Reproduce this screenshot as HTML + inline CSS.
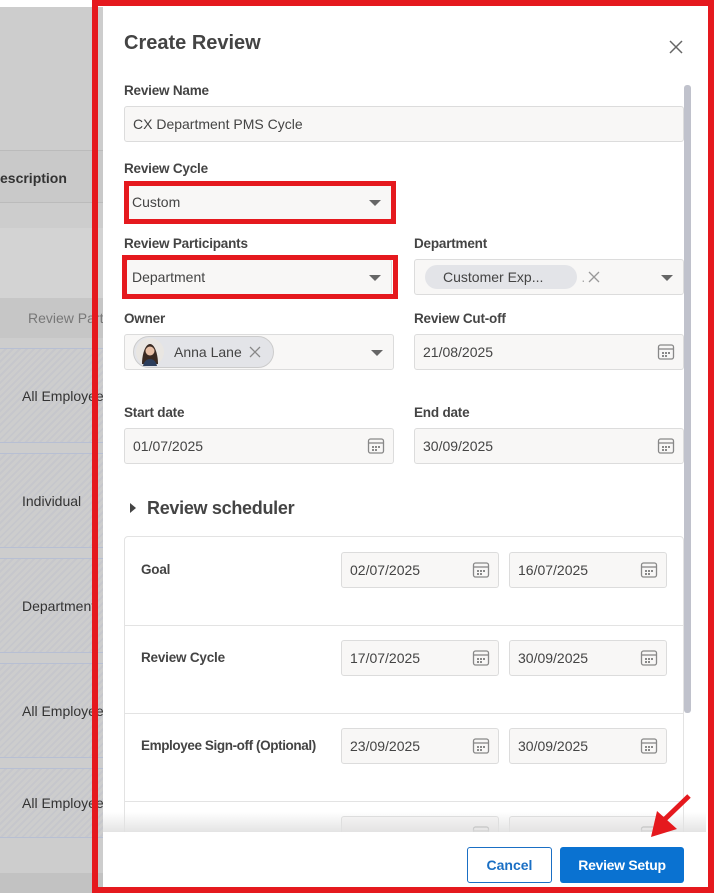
<!DOCTYPE html>
<html><head><style>
*{box-sizing:border-box;margin:0;padding:0}
body{width:714px;height:893px;position:relative;overflow:hidden;background:#fff;font-family:"Liberation Sans",sans-serif;color:#333}
.a{position:absolute;white-space:nowrap}
.lbl{position:absolute;font-size:13.5px;font-weight:bold;color:#444;white-space:nowrap;letter-spacing:-0.2px}
.inp{position:absolute;background:#f8f7f6;border:1px solid #dcdcdc;border-radius:3px;font-size:14px;color:#444;padding-left:8px;display:flex;align-items:center;white-space:nowrap}
.car{position:absolute;right:10px;top:50%;margin-top:-2px;width:0;height:0;border-left:6px solid transparent;border-right:6px solid transparent;border-top:6px solid #666}
.cal{position:absolute;right:8px;top:50%;margin-top:-9px}
.row{position:absolute;left:0;width:103px;overflow:hidden;white-space:nowrap;background:repeating-linear-gradient(135deg,#cdcdcd 0 3px,#c6c7cc 3px 5px);border-top:1px solid #b7bfd3;border-bottom:1px solid #b7bfd3;font-size:14px;color:#333;padding-left:22px;display:flex;align-items:center}
.red{position:absolute;border:5px solid #e5191e}
.sl{position:absolute;left:0;right:0;border-top:1px solid #e3e3e3}
</style></head><body>
<div class="a" style="left:0;top:7px;width:103px;height:886px;background:#cdcdcd"></div>
<div class="a" style="left:0;top:150px;width:103px;height:53px;background:#c9c9c9;border-top:1px solid #bbb;border-bottom:1px solid #bbb;font-size:14px;font-weight:bold;color:#333;padding:19px 0 0 0;overflow:hidden">escription</div>
<div class="a" style="left:0;top:228px;width:103px;height:70px;background:#d3d3d3"></div>
<div class="a" style="left:0;top:298px;width:103px;height:40px;background:#c6c6c6;font-size:14px;color:#777;padding:12px 0 0 28px;overflow:hidden">Review Parti</div>
<div class="row" style="top:348px;height:95px">All Employee</div>
<div class="row" style="top:453px;height:95px">Individual</div>
<div class="row" style="top:558px;height:95px">Department</div>
<div class="row" style="top:663px;height:95px">All Employee</div>
<div class="row" style="top:768px;height:70px">All Employee</div>
<div class="a" style="left:0;top:873px;width:103px;height:20px;background:#c2c2c2"></div>

<div class="a" style="left:103px;top:7px;width:603px;height:886px;background:#fff"></div>
<div class="a" style="left:124px;top:32px;font-size:20px;font-weight:bold;color:#444">Create Review</div>
<svg class="a" style="left:669px;top:40px" width="14" height="14"><path d="M1 1L13 13M13 1L1 13" stroke="#666" stroke-width="1.5"/></svg>
<div class="a" style="left:684px;top:85px;width:7px;height:628px;background:#c0c2cc;border-radius:3px"></div>

<div class="lbl" style="left:124px;top:83px">Review Name</div>
<div class="inp" style="left:124px;top:106px;width:560px;height:36px">CX Department PMS Cycle</div>

<div class="lbl" style="left:124px;top:161px">Review Cycle</div>
<div class="inp" style="left:126px;top:184px;width:266px;height:36px;padding-left:5px">Custom<div class="car"></div></div>
<div class="red" style="left:124px;top:181px;width:272px;height:43px"></div>

<div class="lbl" style="left:124px;top:236px">Review Participants</div>
<div class="inp" style="left:126px;top:259px;width:266px;height:36px;padding-left:5px">Department<div class="car"></div></div>
<div class="red" style="left:122px;top:255px;width:276px;height:44px"></div>

<div class="lbl" style="left:414px;top:236px">Department</div>
<div class="inp" style="left:414px;top:259px;width:270px;height:36px;padding-left:10px"><span style="background:#e3e4e8;border-radius:12px;padding:4px 34px 4px 18px;color:#444">Customer Exp...</span><span style="color:#aaa;margin-left:4px">.</span><svg width="12" height="12" style="margin-left:3px"><path d="M1 1L11 11M11 1L1 11" stroke="#999" stroke-width="1.3"/></svg><div class="car"></div></div>

<div class="lbl" style="left:124px;top:311px">Owner</div>
<div class="inp" style="left:124px;top:334px;width:270px;height:36px;padding-left:8px"><span style="display:flex;align-items:center;background:#e3e4e8;border:1px solid #ccc;border-radius:16px;height:32px;padding:0 12px 0 2px"><svg width="28" height="28"><circle cx="14" cy="14" r="14" fill="#e9e6e2"/><path d="M6 26c0-9 3-20 8-20s8 11 8 20z" fill="#3a2a22"/><circle cx="14" cy="13" r="4.5" fill="#e8c0a6"/><path d="M7 28c1-5 4-7 7-7s6 2 7 7z" fill="#2c3e5c"/></svg><span style="margin-left:10px;color:#444">Anna Lane</span><svg width="12" height="12" style="margin-left:7px"><path d="M1 1L11 11M11 1L1 11" stroke="#888" stroke-width="1.3"/></svg></span><div class="car"></div></div>

<div class="lbl" style="left:414px;top:311px">Review Cut-off</div>
<div class="inp" style="left:414px;top:334px;width:270px;height:36px">21/08/2025<svg class="cal" width="18" height="18"><rect x="1.5" y="2" width="15" height="14" rx="2" fill="none" stroke="#888" stroke-width="1.3"/><line x1="1.5" y1="6" x2="16.5" y2="6" stroke="#888" stroke-width="1.3"/><g fill="#888"><rect x="5" y="9" width="2" height="2"/><rect x="8" y="9" width="2" height="2"/><rect x="11" y="9" width="2" height="2"/><rect x="5" y="12" width="2" height="2"/><rect x="8" y="12" width="2" height="2"/></g></svg></div>

<div class="lbl" style="left:124px;top:405px">Start date</div>
<div class="inp" style="left:124px;top:428px;width:270px;height:36px">01/07/2025<svg class="cal" width="18" height="18"><rect x="1.5" y="2" width="15" height="14" rx="2" fill="none" stroke="#888" stroke-width="1.3"/><line x1="1.5" y1="6" x2="16.5" y2="6" stroke="#888" stroke-width="1.3"/><g fill="#888"><rect x="5" y="9" width="2" height="2"/><rect x="8" y="9" width="2" height="2"/><rect x="11" y="9" width="2" height="2"/><rect x="5" y="12" width="2" height="2"/><rect x="8" y="12" width="2" height="2"/></g></svg></div>
<div class="lbl" style="left:414px;top:405px">End date</div>
<div class="inp" style="left:414px;top:428px;width:270px;height:36px">30/09/2025<svg class="cal" width="18" height="18"><rect x="1.5" y="2" width="15" height="14" rx="2" fill="none" stroke="#888" stroke-width="1.3"/><line x1="1.5" y1="6" x2="16.5" y2="6" stroke="#888" stroke-width="1.3"/><g fill="#888"><rect x="5" y="9" width="2" height="2"/><rect x="8" y="9" width="2" height="2"/><rect x="11" y="9" width="2" height="2"/><rect x="5" y="12" width="2" height="2"/><rect x="8" y="12" width="2" height="2"/></g></svg></div>

<svg class="a" style="left:129px;top:502px" width="8" height="12"><path d="M1 1L7 6L1 11z" fill="#444"/></svg>
<div class="a" style="left:147px;top:498px;font-size:18px;font-weight:bold;color:#444;letter-spacing:-0.3px">Review scheduler</div>

<div class="a" style="left:124px;top:536px;width:560px;height:300px;border:1px solid #e3e3e3;border-radius:4px;overflow:hidden">
 <div class="sl" style="top:88px"></div><div class="sl" style="top:176px"></div><div class="sl" style="top:264px"></div>
 <div class="lbl" style="left:16px;top:25px">Goal</div>
 <div class="lbl" style="left:16px;top:113px">Review Cycle</div>
 <div class="lbl" style="left:16px;top:201px;letter-spacing:-0.4px">Employee Sign-off (Optional)</div>
</div>
<div id="dates"></div>
<script>
var d=[["02/07/2025","16/07/2025",552],["17/07/2025","30/09/2025",640],["23/09/2025","30/09/2025",728],["",""  ,816]];
var cal='<svg class="cal" width="18" height="18"><rect x="1.5" y="2" width="15" height="14" rx="2" fill="none" stroke="#888" stroke-width="1.3"/><line x1="1.5" y1="6" x2="16.5" y2="6" stroke="#888" stroke-width="1.3"/><g fill="#888"><rect x="5" y="9" width="2" height="2"/><rect x="8" y="9" width="2" height="2"/><rect x="11" y="9" width="2" height="2"/><rect x="5" y="12" width="2" height="2"/><rect x="8" y="12" width="2" height="2"/></g></svg>';
var h='';d.forEach(function(r){h+='<div class="inp" style="left:341px;top:'+r[2]+'px;width:158px;height:36px">'+r[0]+cal+'</div><div class="inp" style="left:509px;top:'+r[2]+'px;width:158px;height:36px">'+r[1]+cal+'</div>';});
document.getElementById('dates').innerHTML=h;
</script>

<div class="a" style="left:103px;top:812px;width:603px;height:22px;background:linear-gradient(to bottom,rgba(255,255,255,0),rgba(225,225,225,1))"></div>
<div class="a" style="left:103px;top:832px;width:603px;height:61px;background:#fff"></div>
<div class="a" style="left:467px;top:847px;width:85px;height:36px;border:1px solid #1a6fc4;border-radius:3px;color:#1a6fc4;font-size:14px;font-weight:bold;display:flex;align-items:center;justify-content:center">Cancel</div>
<div class="a" style="left:560px;top:847px;width:124px;height:36px;background:#0a72d1;border-radius:3px;color:#fff;font-size:14px;font-weight:bold;display:flex;align-items:center;justify-content:center;letter-spacing:-0.3px">Review Setup</div>

<svg class="a" style="left:645px;top:793px" width="50" height="50"><path d="M44 3L18 28" stroke="#e5191e" stroke-width="5"/><path d="M6 44L12 18L32 36z" fill="#e5191e"/></svg>

<div class="red" style="left:92px;top:0;width:622px;height:893px;border-width:6px"></div>
</body></html>
